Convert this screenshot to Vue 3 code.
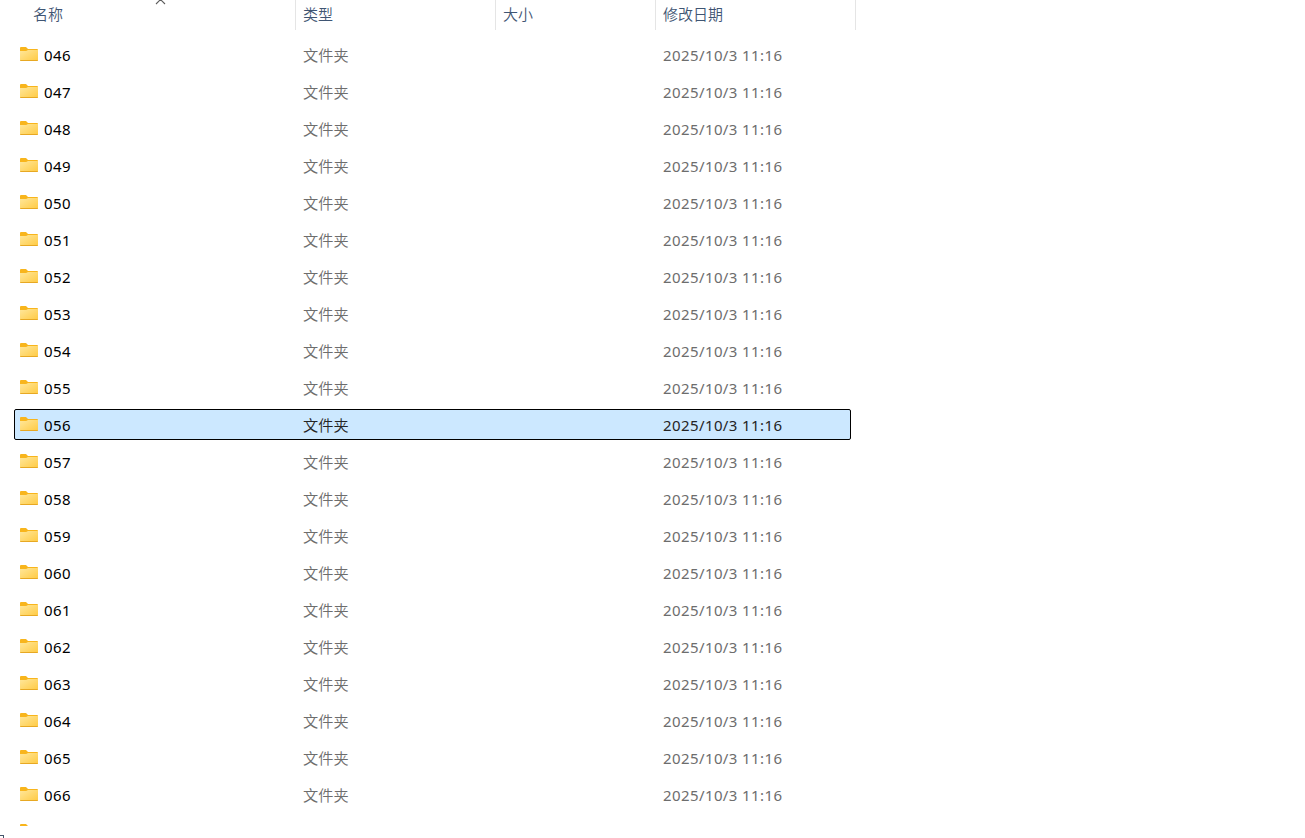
<script setup>
import { ref } from 'vue'

const selected = ref('056')

const folders = Array.from({ length: 21 }, (_, i) => ({
  name: String(46 + i).padStart(3, '0'),
  type: '文件夹',
  date: '2025/10/3 11:16'
}))
</script>

<template>
  <div class="explorer">
    <div class="header">
      <div class="col name">
        名称
        <svg class="sort" width="11" height="6" viewBox="0 0 11 6">
          <path d="M1 5 L5.5 0.5 L10 5" fill="none" stroke="#5d5d5d" stroke-width="1.1" />
        </svg>
      </div>
      <div class="col type">类型</div>
      <div class="col size">大小</div>
      <div class="col date">修改日期</div>
    </div>

    <div class="list">
      <div
        v-for="folder in folders"
        :key="folder.name"
        class="row"
        :class="{ selected: folder.name === selected }"
        @click="selected = folder.name"
      >
        <div class="cell name">
          <svg class="icon" width="18" height="14" viewBox="0 0 18 14">
            <defs>
              <linearGradient :id="'body' + folder.name" x1="0" y1="0" x2="1" y2="1">
                <stop offset="0" stop-color="#ffe79b" />
                <stop offset="1" stop-color="#ffca42" />
              </linearGradient>
            </defs>
            <path d="M0 1 Q0 0 1 0 H6 L8 2 H17 Q18 2 18 3 V6 H0 Z" fill="#f8b51c" />
            <path d="M0 4 H6.2 L8 3 H18 V13 Q18 14 17 14 H1 Q0 14 0 13 Z" :fill="'url(#body' + folder.name + ')'" />
            <path d="M0 13 H18 Q18 14 17 14 H1 Q0 14 0 13 Z" fill="#e7a823" />
          </svg>
          <span>{{ folder.name }}</span>
        </div>
        <div class="cell type">{{ folder.type }}</div>
        <div class="cell size"></div>
        <div class="cell date">{{ folder.date }}</div>
      </div>
      <!-- next folder, only its tab is in view -->
      <div class="row">
        <svg class="icon peek" width="18" height="14" viewBox="0 0 18 14">
          <path d="M0 1 Q0 0 1 0 H6 L8 2 H0 Z" fill="#f8b51c" />
        </svg>
      </div>
    </div>

    <div class="corner"></div>
  </div>
</template>

<style>
body {
  margin: 0;
  background: #fff;
}
</style>

<style scoped>
.explorer {
  position: relative;
  width: 100%;
  height: 838px;
  overflow: hidden;
  background: #fff;
  font-family: "Noto Sans", "Noto Sans CJK SC", sans-serif;
  font-size: 15px;
}

.header {
  display: flex;
  height: 30px;
  color: #3f5573;
  font-family: "Noto Sans CJK SC", sans-serif;
  font-weight: 350;
  line-height: 27px;
}

.col {
  position: relative;
  box-sizing: border-box;
  padding-left: 7px;
  border-right: 1px solid #e5e5e5;
}

.col.name {
  width: 296px;
  padding-left: 33px;
}

.col.type {
  width: 200px;
}

.col.size {
  width: 160px;
}

.col.date {
  width: 200px;
}

.sort {
  position: absolute;
  top: -1px;
  left: 155px;
}

.list {
  display: flex;
  box-sizing: border-box;
  flex-direction: column;
  gap: 6px;
  height: 796px;
  padding: 9px 0 0 14px;
  overflow: hidden;
}

.row {
  display: flex;
  flex: none;
  box-sizing: border-box;
  width: 837px;
  height: 31px;
  border: 1px solid transparent;
  border-radius: 2px;
  color: #6d6d6d;
  line-height: 31px;
}

.row.selected {
  border-color: #000;
  background: #cce8ff;
  color: #242424;
}

.cell {
  box-sizing: border-box;
  white-space: nowrap;
  letter-spacing: 0.4px;
}

.cell.name {
  display: flex;
  width: 283px;
  padding-left: 5px;
  color: #000;
}

.icon {
  margin: 7px 6px 0 0;
}

.icon.peek {
  margin-left: 5px;
}

.cell.type {
  width: 200px;
  padding-left: 5px;
  font-family: "Noto Sans CJK SC", sans-serif;
  font-weight: 350;
  font-size: 15.2px;
  letter-spacing: 0;
  line-height: 29px;
}

.cell.size {
  width: 160px;
}

.cell.date {
  padding-left: 5px;
}

/* edge of the pane below the list */
.corner {
  position: absolute;
  left: 0;
  top: 835px;
  box-sizing: border-box;
  width: 4px;
  height: 4px;
  border-top: 1px solid #44546a;
  border-right: 1px solid #44546a;
}
</style>
